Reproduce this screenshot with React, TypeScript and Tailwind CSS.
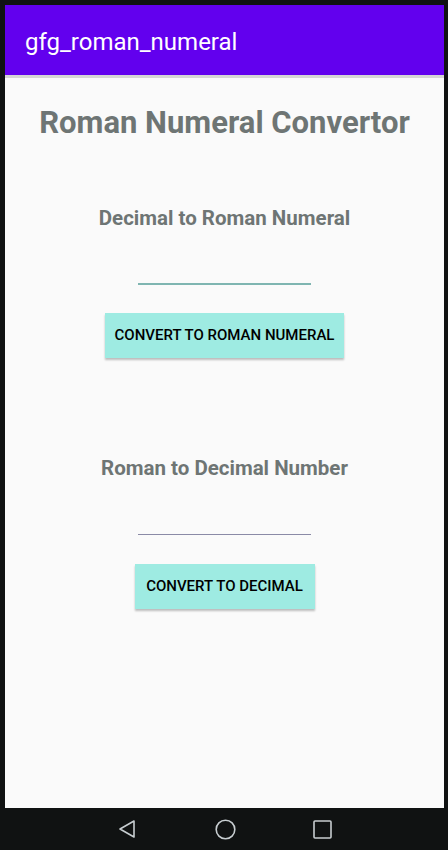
import React from "react";

export default function App() {
    return (
        <div className="w-[448px] h-[850px] bg-[#101212] flex flex-col pt-[5px] pr-[4px] pl-[5px]" style={{ fontFamily: "Roboto, 'Liberation Sans', sans-serif" }}>
            {/* App bar */}
            <div className="h-[70px] bg-[#6200ee] flex items-center pl-[20px] pt-[4px] shrink-0">
                <span className="text-white text-[24px] leading-none">gfg_roman_numeral</span>
            </div>

            {/* Content */}
            <div className="flex-1 bg-[#fafafa] flex flex-col items-center border-t-[3px] border-[#d6d6d6]">
                <h1 className="mt-[27px] text-[31px] font-bold text-[#6e7574] leading-[36px]">Roman Numeral Convertor</h1>

                <h2 className="mt-[64px] text-[20.5px] font-bold text-[#6e7574] leading-[26px]">Decimal to Roman Numeral</h2>
                <div className="mt-[52px] w-[173px] h-[2px] bg-[#7fb5b1]" />
                <button className="mt-[28px] w-[239px] h-[45px] bg-[#9eebe2] text-[15px] font-medium text-black shadow-[0_2px_2px_rgba(0,0,0,0.25)]">
                    CONVERT TO ROMAN NUMERAL
                </button>

                <h2 className="mt-[97px] text-[20.5px] font-bold text-[#6e7574] leading-[26px]">Roman to Decimal Number</h2>
                <div className="mt-[53px] w-[173px] h-px bg-[#8a8aa6]" />
                <button className="mt-[29px] w-[180px] h-[45px] bg-[#9eebe2] text-[15px] font-medium text-black shadow-[0_2px_2px_rgba(0,0,0,0.25)]">
                    CONVERT TO DECIMAL
                </button>
            </div>

            {/* Nav bar */}
            <div className="h-[42px] shrink-0 flex items-center justify-center -ml-[5px] -mr-[4px]">
                <svg width="20" height="20" viewBox="0 0 20 20" className="mr-[78px]">
                    <path d="M17 2 L3 10 L17 18 Z" fill="none" stroke="#c7cdd0" strokeWidth="1.6" strokeLinejoin="round" />
                </svg>
                <svg width="21" height="21" viewBox="0 0 21 21" className="mr-[77px]">
                    <circle cx="10.5" cy="10.5" r="9.3" fill="none" stroke="#c7cdd0" strokeWidth="1.6" />
                </svg>
                <svg width="19" height="19" viewBox="0 0 19 19">
                    <rect x="1" y="1" width="17" height="17" rx="1" fill="none" stroke="#c7cdd0" strokeWidth="1.6" />
                </svg>
            </div>
        </div>
    );
}
